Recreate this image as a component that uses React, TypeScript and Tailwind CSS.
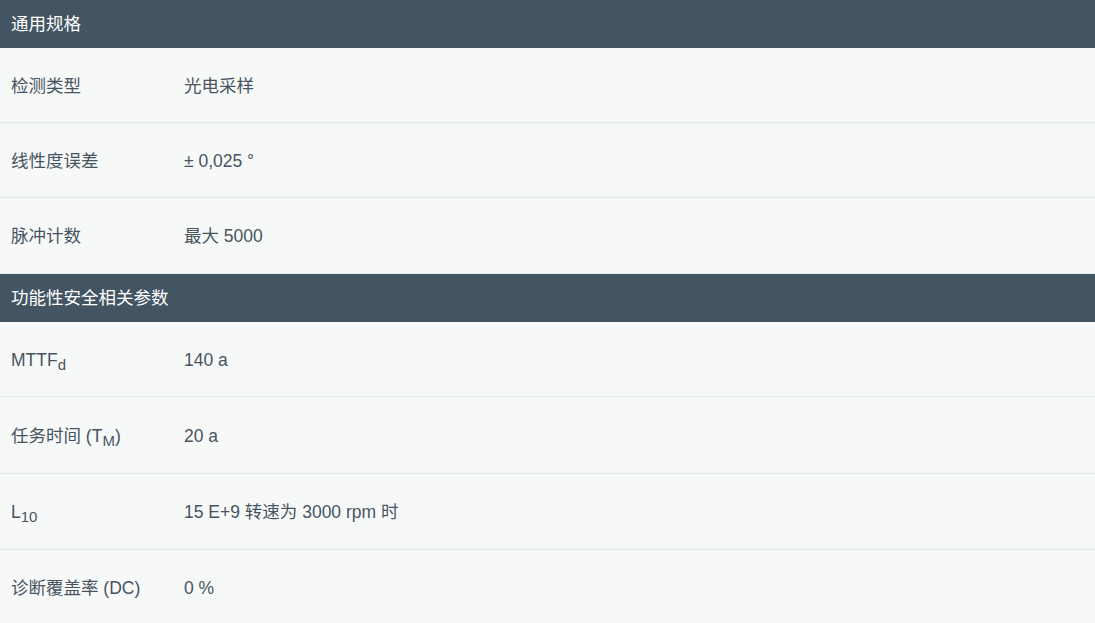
const font = { fontFamily: '"Liberation Sans", "Noto Sans CJK SC", sans-serif' }

type Row = { label: React.ReactNode; value: React.ReactNode; h: string }

const general: Row[] = [
  { label: "检测类型", value: "光电采样", h: "h-[75px]" },
  { label: "线性度误差", value: "± 0,025 °", h: "h-[75px]" },
  { label: "脉冲计数", value: "最大 5000", h: "h-[76px]" },
]

const safety: Row[] = [
  {
    label: (
      <>
        MTTF<sub className="text-[15px]">d</sub>
      </>
    ),
    value: "140 a",
    h: "h-[75px]",
  },
  {
    label: (
      <>
        任务时间 (T<sub className="text-[15px]">M</sub>)
      </>
    ),
    value: "20 a",
    h: "h-[77px]",
  },
  {
    label: (
      <>
        L<sub className="text-[15px]">10</sub>
      </>
    ),
    value: "15 E+9 转速为 3000 rpm 时",
    h: "h-[76px]",
  },
  { label: "诊断覆盖率 (DC)", value: "0 %", h: "h-[74px]" },
]

function Section({ title, rows, last }: { title: string; rows: Row[]; last?: boolean }) {
  return (
    <div>
      <div className="flex h-[48px] items-center bg-[#435563] pl-[11px] pt-[1px] text-[17.5px] text-white">
        {title}
      </div>
      {rows.map((r, i) => (
        <div
          key={i}
          className={`flex items-center pl-[11px] pt-[2px] text-[17.5px] text-[#47545f] ${r.h} ${
            last && i === rows.length - 1 ? "" : "border-b border-[#e5e8e9]"
          }`}
        >
          <div className="w-[173px]">{r.label}</div>
          <div>{r.value}</div>
        </div>
      ))}
    </div>
  )
}

export default function App() {
  return (
    <div className="min-h-[623px] w-full bg-[#f7f9f9]" style={font}>
      <Section title="通用规格" rows={general} />
      <Section title="功能性安全相关参数" rows={safety} last />
    </div>
  )
}
